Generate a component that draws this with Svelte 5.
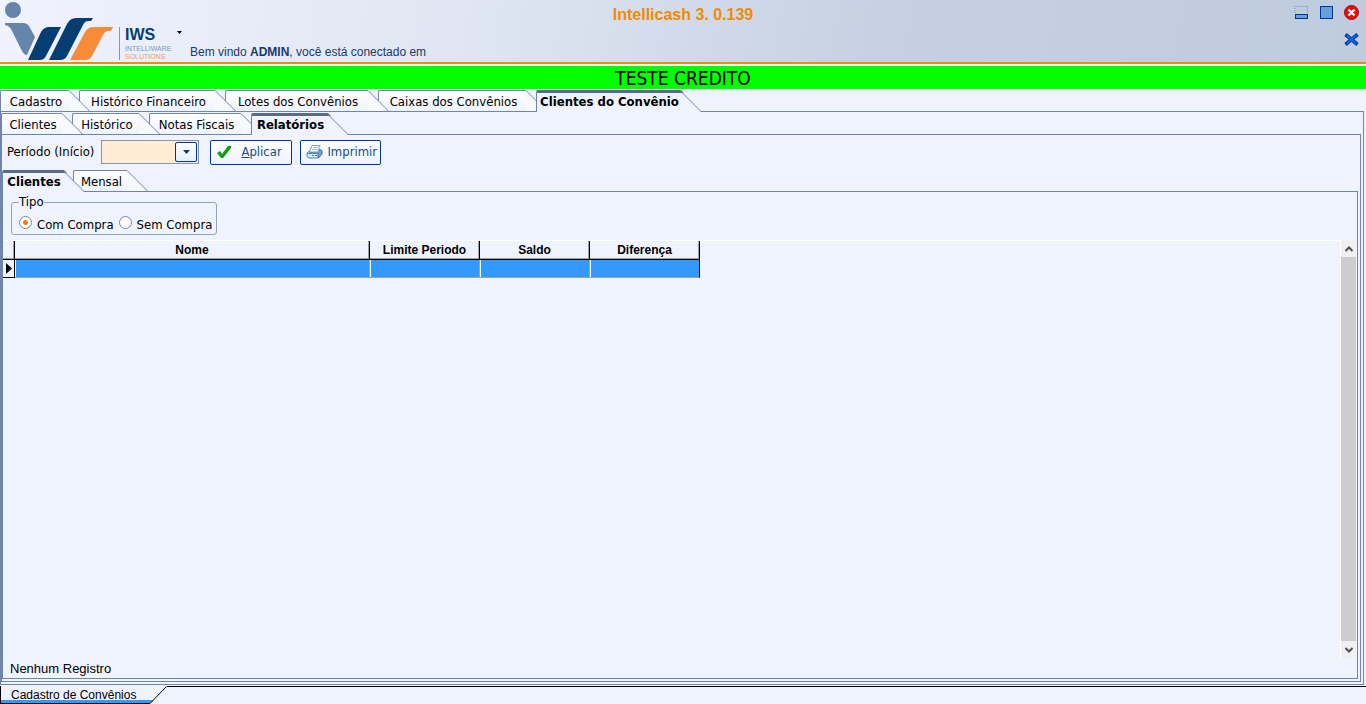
<script>
  const mainTabs = [
    { label: 'Cadastro', width: 69 },
    { label: 'Histórico Financeiro', width: 136 },
    { label: 'Lotes dos Convênios', width: 143 },
    { label: 'Caixas dos Convênios', width: 148 },
    { label: 'Clientes do Convênio', width: 144 }
  ]
  const clientTabs = [
    { label: 'Clientes', width: 61 },
    { label: 'Histórico', width: 67 },
    { label: 'Notas Fiscais', width: 92 },
    { label: 'Relatórios', width: 76 }
  ]
  const reportTabs = [
    { label: 'Clientes', width: 61 },
    { label: 'Mensal', width: 54 }
  ]
  const columns = [
    { label: 'Nome', width: 355 },
    { label: 'Limite Periodo', width: 110 },
    { label: 'Saldo', width: 110 },
    { label: 'Diferença', width: 110 }
  ]

  let mainTab = $state(4)
  let clientTab = $state(3)
  let reportTab = $state(0)
  let period = $state('')
  let kind = $state('com')
</script>

{#snippet tabBar(tabs, active, select)}
  <div class="tabs" role="tablist">
    {#each tabs as tab, i}
      <button
        class="tab"
        class:active={i === active}
        role="tab"
        aria-selected={i === active}
        style:z-index={i === active ? 10 : 9 - i}
        onclick={() => select(i)}
      >
        <span class="face" style:width="{tab.width}px">{tab.label}</span>
        <svg class="slant" width="22" height="22" viewBox="0 0 22 22">
          <path class="fill" d="M0 0 L21 22 H0 Z" />
          {#if i === active}
            <path d="M0 0 H1 L4 3 H0 Z" fill="#5a6a8c" />
          {:else}
            <path d="M0 21.5 H22" stroke="#7085ab" />
          {/if}
          <path d="M0 .5 L21 21.5" fill="none" stroke="#7085ab" />
        </svg>
      </button>
    {/each}
  </div>
{/snippet}

<div class="window">
  <header>
    <div class="brand">
      <svg width="172" height="62" viewBox="0 0 172 62" role="img" aria-label="IWS Intelliware Solutions">
        <circle cx="13" cy="10" r="8" fill="#6685ab" />
        <path d="M5 23 H23 Q27 23 29 26 L35 37 L27 55 Q24 55 22 51 L12 31 Q10 26 5 25 Z" fill="#6685ab" />
        <path d="M28 60 L41 32 Q44 27 49 27 H61 L46 56 Q44 60 40 60 Z" fill="#063e74" />
        <path d="M49 60 L67 24 Q70 18 76 18 H93 L91 21 H88 Q85 21 83 25 L67 56 Q65 60 60 60 Z" fill="#063e74" />
        <path d="M70 60 L85 32 Q88 27 94 27 H113 L111 31 H108 Q105 31 103 35 L92 56 Q90 60 85 60 Z" fill="#f78b38" />
        <path d="M119.5 27 V60" stroke="#8195b5" />
        <text x="125" y="40" font-size="16" font-weight="700" fill="#063e74">IWS</text>
        <text x="125" y="51" font-size="7" fill="#7f96b8">INTELLIWARE</text>
        <text x="125" y="59" font-size="7" fill="#f09a58">SOLUTIONS</text>
      </svg>
      <button class="menu" aria-label="Menu">
        <svg width="5" height="3" viewBox="0 0 5 3"><path d="M0 0 H5 L2.5 3 Z" /></svg>
      </button>
      <p>Bem vindo <b>ADMIN</b>, você está conectado em</p>
    </div>
    <h1>Intellicash 3. 0.139</h1>
    <div class="controls">
      <button aria-label="Minimizar">
        <svg width="15" height="15" viewBox="0 0 15 15">
          <path d="M1 8 V1.5 H13.5 V8" fill="none" stroke="#5f9cd4" stroke-dasharray="1 1" />
          <rect x="1.5" y="9.5" width="12" height="4" fill="#65a0d8" stroke="#0532a0" />
        </svg>
      </button>
      <button aria-label="Restaurar">
        <svg width="15" height="15" viewBox="0 0 15 15">
          <rect x="1.5" y="1.5" width="12" height="12" fill="#65a0d8" stroke="#0532a0" />
        </svg>
      </button>
      <button aria-label="Sair">
        <svg width="15" height="15" viewBox="0 0 15 15">
          <circle cx="7.5" cy="7.5" r="7" fill="#fe0000" stroke="#a01010" />
          <path d="M4.5 4.5 L10.5 10.5 M10.5 4.5 L4.5 10.5" stroke="#fff" stroke-width="2.4" />
        </svg>
      </button>
      <button class="close-page" aria-label="Fechar">
        <svg width="15" height="13" viewBox="0 0 15 13">
          <path d="M1.5 1.5 L13.5 11.5 M13.5 1.5 L1.5 11.5" stroke="#0532a0" stroke-width="3.6" />
          <path d="M2.5 2.3 L12.5 10.7 M12.5 2.3 L2.5 10.7" stroke="#0a6cd6" stroke-width="2" />
        </svg>
      </button>
    </div>
  </header>

  <div class="notice">TESTE CREDITO</div>

  <main>
    {@render tabBar(mainTabs, mainTab, i => (mainTab = i))}
    <div class="page">
      {@render tabBar(clientTabs, clientTab, i => (clientTab = i))}
      <div class="page">
        <div class="toolbar">
          <label for="period">Período (Início)</label>
          <div class="combo">
            <input id="period" type="text" bind:value={period} />
            <button aria-label="Abrir calendário">
              <svg width="7" height="4" viewBox="0 0 7 4"><path d="M0 0 H7 L3.5 4 Z" fill="#063e74" /></svg>
            </button>
          </div>
          <button class="action apply">
            <svg width="14" height="14" viewBox="0 0 14 14">
              <path d="M0 8 L3 6 L5 9 L11 1 L14 1 V3 L6 13 H4 Z" fill="#0a9a0a" />
              <path d="M1 8 L5 11 L12 2" fill="none" stroke="#12b312" />
            </svg>
            <span><u>A</u>plicar</span>
          </button>
          <button class="action print">
            <svg width="17" height="16" viewBox="0 0 17 16">
              <path d="M6 1.5 H14 L11.5 8 H3.5 Z" fill="#fff" stroke="#7ea5cb" />
              <path d="M7 3.5 H12 M6 5.5 H11" stroke="#a9c6df" />
              <path d="M12 9 L13.5 5.5 L16 6.5 V10 L12.5 14 Z" fill="#72a6da" stroke="#2f6cae" />
              <path d="M1 9 L3.5 7 V8.5 H12 L14 6" fill="#a9cdf0" stroke="#5d95cd" />
              <path d="M1 9.5 H12 V14 H3 L1 12.5 Z" fill="#d6e9f8" stroke="#4a83bd" />
              <path d="M6 11.5 H8" stroke="#20a040" />
              <path d="M9 11.5 H11" stroke="#e03030" />
            </svg>
            <span>Imprimir</span>
          </button>
        </div>

        {@render tabBar(reportTabs, reportTab, i => (reportTab = i))}
        <div class="page report">
          <fieldset>
            <legend>Tipo</legend>
            <label><input type="radio" value="com" bind:group={kind} />Com Compra</label>
            <label><input type="radio" value="sem" bind:group={kind} />Sem Compra</label>
          </fieldset>

          <div class="grid">
            <div class="rows">
              <table>
                <colgroup>
                  <col style:width="12px" />
                  {#each columns as column}
                    <col style:width="{column.width}px" />
                  {/each}
                </colgroup>
                <thead>
                  <tr>
                    <th></th>
                    {#each columns as column}
                      <th>{column.label}</th>
                    {/each}
                  </tr>
                </thead>
                <tbody>
                  <tr>
                    <td class="marker">
                      <svg width="6" height="11" viewBox="0 0 6 11"><path d="M0 0 L6 5.5 L0 11 Z" /></svg>
                    </td>
                    {#each columns as column}
                      <td></td>
                    {/each}
                  </tr>
                </tbody>
              </table>
            </div>
            <div class="scrollbar">
              <button aria-label="Rolar para cima">
                <svg width="8" height="6" viewBox="0 0 8 6"><path d="M.5 5 L4 1.5 L7.5 5" /></svg>
              </button>
              <div class="thumb"></div>
              <button aria-label="Rolar para baixo">
                <svg width="8" height="6" viewBox="0 0 8 6"><path d="M.5 1 L4 4.5 L7.5 1" /></svg>
              </button>
            </div>
          </div>

          <p class="count">Nenhum Registro</p>
        </div>
      </div>
    </div>
  </main>

  <footer>
    <button>Cadastro de Convênios</button>
    <svg width="17" height="18" viewBox="0 0 17 18">
      <path d="M0 14 H3.5 L0 17 Z" fill="#3399ff" />
      <path d="M0 17.5 L16.5 .5" fill="none" stroke="#000" />
    </svg>
    <div class="rest"></div>
  </footer>
</div>

<style>
  :global(body) {
    margin: 0;
    background: #eef3fe;
  }

  .window {
    min-height: 100vh;
    display: flex;
    flex-direction: column;
    background: #eef3fe;
    color: #000;
    font: 13px/16px "DejaVu Sans Condensed", "Noto Sans", sans-serif;
  }

  button {
    margin: 0;
    padding: 0;
    border: 0;
    background: none;
    color: inherit;
    font: inherit;
  }

  svg {
    display: block;
    flex: none;
  }

  p {
    margin: 0;
  }

  header {
    display: grid;
    grid-template-columns: 1fr auto 1fr;
    height: 62px;
    border-bottom: 2px solid #f08c00;
    background: linear-gradient(100deg, #f0f3fd 0%, #dfe5f2 35%, #c6d0e2 65%, #bfcbde 100%);
    font-family: "Liberation Sans", Arial, sans-serif;
  }

  .brand {
    display: flex;
    align-items: flex-start;
    color: #1a3a6a;
    font-size: 12px;
    white-space: nowrap;
  }

  .menu {
    padding: 31px 8px 0 5px;
  }

  .brand p {
    padding-top: 44px;
  }

  h1 {
    margin: 0;
    padding-top: 6px;
    color: #f08c00;
    font-size: 16px;
    line-height: 18px;
  }

  .controls {
    display: grid;
    grid-template-columns: repeat(3, 15px);
    justify-content: end;
    align-content: start;
    gap: 13px 10px;
    padding: 5px 7px 0 0;
  }

  .close-page {
    grid-column: 3;
  }

  .notice {
    height: 23px;
    border-top: 2px solid #fff;
    background: #0f0;
    font-size: 19px;
    line-height: 24px;
    text-align: center;
  }

  main {
    flex: 1;
    display: flex;
    flex-direction: column;
    padding: 0 2px 1px 0;
  }

  .tabs {
    display: flex;
    height: 22px;
    position: relative;
    z-index: 1;
    margin-bottom: -1px;
    padding-top: 1px;
  }

  .tab {
    display: flex;
    position: relative;
    height: 22px;
    margin-right: -12px;
    white-space: nowrap;
  }

  .face {
    box-sizing: border-box;
    height: 22px;
    padding-left: 2px;
    border: solid #7085ab;
    border-width: 1px 0 1px 1px;
    border-top-left-radius: 2px;
    background: linear-gradient(#fff, #eef3fe);
    line-height: 21px;
    text-align: center;
  }

  .fill {
    fill: #f6f9ff;
  }

  .active .face {
    border-top: 3px solid #5a6a8c;
    border-bottom: 0;
    background: #eef3fe;
    font-weight: 700;
    line-height: 18px;
  }

  .active .fill {
    fill: #eef3fe;
  }

  .page {
    flex: 1;
    display: flex;
    flex-direction: column;
    padding: 0 2px 2px 0;
    border: 1px solid #7085ab;
    background: #eef3fe;
  }

  .toolbar {
    display: flex;
    align-items: center;
    height: 34px;
    padding-left: 5px;
    line-height: 18px;
  }

  .combo {
    display: flex;
    box-sizing: border-box;
    width: 98px;
    height: 24px;
    margin: 0 11px 0 7px;
    border: 1px solid #8195b5;
    background: #ffecd6;
  }

  .combo input {
    flex: 1;
    min-width: 0;
    padding: 0 3px;
    border: 0;
    background: none;
    font: inherit;
  }

  .combo button {
    display: grid;
    place-items: center;
    width: 22px;
    margin: 1px;
    border: 1px solid #0532a0;
    border-radius: 2px;
    background: linear-gradient(#fff, #e6edfb);
  }

  .action {
    display: flex;
    align-items: center;
    box-sizing: border-box;
    height: 25px;
    border: 1px solid #0532a0;
    border-radius: 2px;
    background: linear-gradient(#fff, #eef3fe);
    color: #1a4a86;
  }

  .apply {
    gap: 10px;
    width: 82px;
    margin-right: 8px;
    padding-left: 6px;
  }

  .print {
    gap: 4px;
    width: 81px;
    padding-left: 5px;
  }

  .report {
    padding: 0;
  }

  fieldset {
    display: flex;
    box-sizing: border-box;
    width: 206px;
    height: 40px;
    min-width: 0;
    margin: 3px 0 0 8px;
    padding: 7px 0 0 7px;
    border: 1px solid #8fa3c1;
    border-radius: 3px;
    gap: 5px;
    line-height: 18px;
    white-space: nowrap;
  }

  legend {
    padding: 0;
    line-height: 14px;
  }

  fieldset label {
    display: flex;
    align-items: flex-start;
    gap: 5px;
  }

  input[type="radio"] {
    appearance: none;
    box-sizing: border-box;
    flex: none;
    width: 13px;
    height: 13px;
    margin: 0;
    border: 1px solid #7085ab;
    border-radius: 50%;
    background: #fff;
  }

  input[type="radio"]:checked {
    background: radial-gradient(circle, #ff8000 0 2px, #fff 3px);
  }

  .grid {
    flex: 1;
    display: flex;
    margin-top: 5px;
  }

  .rows {
    flex: 1;
    border: solid #fff;
    border-width: 1px 1px 0 0;
  }

  table {
    width: 697px;
    border-collapse: separate;
    border-spacing: 0;
    table-layout: fixed;
    font-family: "Liberation Sans", Arial, sans-serif;
    font-size: 12px;
  }

  th {
    box-sizing: border-box;
    height: 19px;
    padding: 0;
    border-right: 1px solid #000;
    border-bottom: 1px solid #000;
    box-shadow: inset -1px -1px #a0a0a0;
  }

  td {
    box-sizing: border-box;
    height: 18px;
    padding: 0;
    border-right: 1px solid #a0a0a0;
    border-bottom: 1px solid #a0a0a0;
    background: #3399ff;
    box-shadow: inset 1px 0 #fff;
  }

  td:last-child {
    border-right-color: #000;
  }

  .marker {
    padding-left: 3px;
    border-color: #000;
    background: none;
    box-shadow: none;
  }

  .scrollbar {
    display: flex;
    flex-direction: column;
    width: 15px;
    margin-right: 1px;
    background: #f0f0f0;
  }

  .scrollbar button {
    display: grid;
    place-items: center;
    height: 17px;
  }

  .scrollbar path {
    fill: none;
    stroke: #505050;
    stroke-width: 2;
  }

  .thumb {
    flex: 1;
    background: #cdcdcd;
  }

  .count {
    padding: 3px 0 1px 7px;
    font-family: "Liberation Sans", Arial, sans-serif;
  }

  footer {
    display: flex;
    height: 18px;
    font: 12px/16px "Liberation Sans", Arial, sans-serif;
  }

  footer button {
    box-sizing: border-box;
    width: 150px;
    border-left: 1px solid #000;
    border-bottom: 1px solid #000;
    box-shadow: inset 0 -3px #3399ff;
    padding-left: 10px;
    text-align: left;
  }

  .rest {
    flex: 1;
    border-top: 1px solid #000;
  }
</style>
